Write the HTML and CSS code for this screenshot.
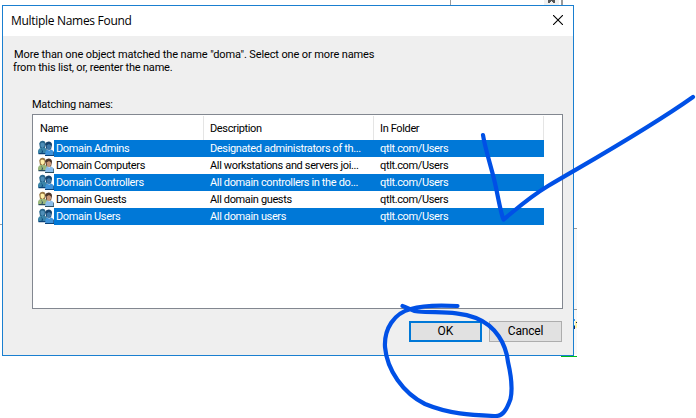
FILE: index.html
```
<!DOCTYPE html>
<html lang="en">
<head>
<meta charset="utf-8">
<title>Multiple Names Found</title>
<link rel="stylesheet" href="styles.css">
</head>
<body>
<svg class="backdrop" width="696" height="418" viewBox="0 0 696 418" aria-hidden="true" shape-rendering="crispEdges">
  <path fill="#9b9b9b" d="M450 0h1v5h-1zM561 0h2v5h-2zM0 224h2v1H0zM574 228h3v1h-3zM574 309h3v1h-3z"/>
  <path fill="#f0f0f0" d="M544 0h15v5h-15z"/>
  <path fill="#555" d="M548 0h7v3h-2v-1h-1v-1h-1v1h-1v1h-2z"/>
  <path fill="#f8f8f8" d="M574 229h3v80h-3zM574 310h3v44h-3z"/>
  <path fill="#4a9be5" d="M574 319h1v2h-1zM574 325h1v1h-1z"/>
  <path fill="#fff4a8" d="M575 321h2v7h-2z"/>
  <path fill="#102060" d="M576 322h1v1h-1zM574 326h1v3h-1z"/>
  <path fill="#00bb18" d="M561 356h16v1h-16z"/>
</svg>
<svg width="0" height="0" class="defs" aria-hidden="true">
  <symbol id="group" viewBox="0 0 16 16">
    <path class="ic-coat" d="M0 13.500V10.500Q.5 8.500 3.500 7.500L7.500 8 9 10v3.500z"/>
    <path class="ic-shade" d="M.5 13h8v1.200h-8zM3 8l2 3.500L4 14H3.200L4 11z"/>
    <path class="ic-hair" d="M1.200 3.500Q2 .5 4.500 .7 7.500 .7 7.500 4L7 8H2z"/>
    <path class="ic-face" d="M2.500 3.500l1.500-1 2.500 1V6L4.600 8 2.800 6.500z"/>
    <path class="ic-dark" d="M7 4Q8 1.400 10.500 1.400 14 1.600 14 5L13 9.500H8.500z"/>
    <path class="ic-skin" d="M8.500 5.500l2.500-1.500 2 1.500v2.500L11.200 10.500 9 8.500z"/>
    <path class="ic-shirt" d="M7.300 15.500V12.500Q7.600 10.500 9.500 9.600l1.700 1.200L13 9.500Q15.500 10 15.600 12.500v3z"/>
    <path class="ic-shade" d="M7 15h9v1H7zM15.300 11.500h.7v4h-.7z"/>
  </symbol>
</svg>
<main class="dialog">
  <header class="titlebar">
    <h1>Multiple Names Found</h1>
    <svg class="close" width="10" height="10" viewBox="0 0 10 10"><path d="M0 0l10 10M10 0L0 10"/></svg>
  </header>
  <div class="message">
    <p><span class="m1">More than one object matched the name "doma". Select one or more names</span></p>
    <p><span class="m2">from this list, or, reenter the name.</span></p>
  </div>
  <p class="label">Matching names:</p>
  <section class="list">
    <div class="head"><span>Name</span><span>Description</span><span>In Folder</span></div>
    <div class="row selected"><svg class="icon"><use href="#group"/></svg><span class="name">Domain Admins</span><span class="desc">Designated administrators of th...</span><span>qtlt.com/Users</span></div>
    <div class="row"><svg class="icon"><use href="#group"/></svg><span class="name">Domain Computers</span><span class="desc">All workstations and servers joi...</span><span>qtlt.com/Users</span></div>
    <div class="row selected"><svg class="icon"><use href="#group"/></svg><span class="name">Domain Controllers</span><span class="desc">All domain controllers in the do...</span><span>qtlt.com/Users</span></div>
    <div class="row"><svg class="icon"><use href="#group"/></svg><span class="name">Domain Guests</span><span class="desc">All domain guests</span><span>qtlt.com/Users</span></div>
    <div class="row selected"><svg class="icon"><use href="#group"/></svg><span class="name">Domain Users</span><span class="desc">All domain users</span><span>qtlt.com/Users</span></div>
  </section>
  <footer class="actions">
    <button class="ok">OK</button>
    <button>Cancel</button>
  </footer>
</main>
<svg class="ink" width="696" height="418" viewBox="0 0 696 418" aria-hidden="true">
  <path d="M483 135C485 148 490 163 494 179C498 195 500 211 503.500 219.500C513 212 528 198 548 186C585 164 645 131 693 97"/>
  <path d="M402.500 306C408 307.500 411 311 418 311.500C440 313 458 311 476 318C496 326 506 344 508 362C511 375 513 388 510.500 399C507 409 503 417 494 416C471 415 449 414 425 404C403 393 387 370 385 347C384 329 394 313 411 309C423 305 439 305 457.500 306"/>
</svg>
</body>
</html>
```
FILE: styles.css
```
* { box-sizing: border-box; }
body {
  margin: 0;
  padding: 5px 0 0 2px;
  width: 696px;
  height: 418px;
  overflow: hidden;
  background: #fff;
  color: #000;
  font: 11px/13px Roboto, "Liberation Sans", sans-serif;
}
h1, p { margin: 0; font-weight: 400; white-space: nowrap; }
.backdrop, .ink { position: absolute; left: 0; top: 0; }
.ink {
  fill: none;
  stroke: #0050e6;
  stroke-width: 4.2;
  stroke-linecap: round;
  stroke-linejoin: round;
  pointer-events: none;
}
.defs { position: absolute; }
.dialog {
  position: relative;
  width: 572px;
  height: 351px;
  background: #efefef;
  border: 1px solid #1a7fd0;
}
.titlebar {
  display: flex;
  justify-content: space-between;
  height: 30px;
  padding: 9px 10px 0 8px;
  background: #fff;
}
.titlebar h1 {
  font: 12px/12px "Open Sans", "Noto Sans", sans-serif;
  letter-spacing: -0.3px;
}
.close { stroke: #000; stroke-width: 1.1; }
.message { height: 62px; padding: 12px 0 0 11px; }
.m1 { letter-spacing: -0.12px; }
.m2 { margin-left: -1px; letter-spacing: -0.19px; }
.label { padding-left: 29px; height: 16px; letter-spacing: -0.25px; }
.list {
  width: 531px;
  height: 195px;
  margin-left: 29px;
  border: 1px solid #828790;
  background: #fff;
  letter-spacing: -0.36px;
}
.head {
  display: grid;
  grid-template-columns: 171px 170px 170px;
  height: 25px;
  padding-top: 1px;
}
.head span {
  height: 24px;
  padding: 6px 0 0 7px;
  border-right: 1px solid #e5e5e5;
}
.head span + span { padding-left: 6px; }
.row {
  display: grid;
  grid-template-columns: 21px 154px 169px 167px;
  width: 511px;
  height: 17px;
  line-height: 18px;
  white-space: nowrap;
}
.row span { height: 17px; padding-left: 3px; }
.row .name, .row .desc { padding-left: 2px; }
.selected span { background: #0078d7; color: #fff; }
.icon { width: 16px; height: 16px; margin-left: 5px; }
.icon {
  --hair: #9a7845;
  --face: #fff0a8;
  --coat: #9ab77b;
  --shade: #294d61;
  --dark: #4b3529;
  --skin: #c99776;
  --shirt: #8bbde9;
}
.selected .icon {
  --hair: #28668c;
  --face: #4f8fb8;
  --coat: #3a84a8;
  --shade: #0b4278;
  --dark: #15426b;
  --skin: #3d78a8;
  --shirt: #3f93da;
}
.ic-hair { fill: var(--hair); }
.ic-face { fill: var(--face); }
.ic-coat { fill: var(--coat); }
.ic-shade { fill: var(--shade); }
.ic-dark { fill: var(--dark); }
.ic-skin { fill: var(--skin); }
.ic-shirt { fill: var(--shirt); }
.actions { display: flex; gap: 7px; padding: 12px 0 0 406px; }
.actions button {
  width: 73px;
  height: 21px;
  padding: 0;
  border: 1px solid #adadad;
  background: #e1e1e1;
  font: 12px/17px Roboto, "Liberation Sans", sans-serif;
  letter-spacing: -0.2px;
  color: #000;
}
.actions .ok { border: 2px solid #0078d7; letter-spacing: 0; }
```
